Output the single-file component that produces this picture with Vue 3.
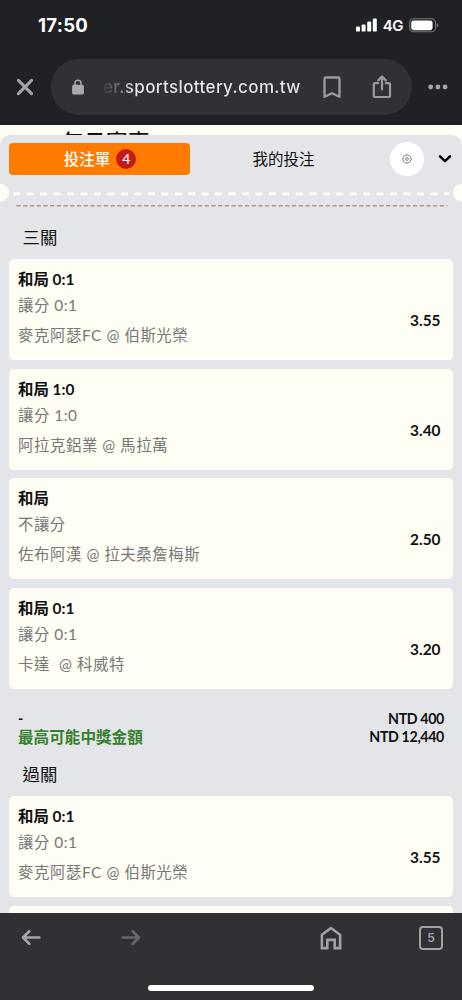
<script setup>
const tripleBets = [
  { pick: '和局 0:1', market: '讓分 0:1', match: '麥克阿瑟FC @ 伯斯光榮', odds: '3.55' },
  { pick: '和局 1:0', market: '讓分 1:0', match: '阿拉克鋁業 @ 馬拉萬', odds: '3.40' },
  { pick: '和局', market: '不讓分', match: '佐布阿漢 @ 拉夫桑詹梅斯', odds: '2.50' },
  { pick: '和局 0:1', market: '讓分 0:1', match: '卡達  @ 科威特', odds: '3.20' },
]
const parlayBets = [
  { pick: '和局 0:1', market: '讓分 0:1', match: '麥克阿瑟FC @ 伯斯光榮', odds: '3.55' },
]
const groups = [
  { title: '三關', bets: tripleBets, stake: 'NTD 400', payout: 'NTD 12,440' },
  { title: '過關', bets: parlayBets, more: true },
]
</script>

<template>
  <div class="phone">
    <header class="chrome">
      <div class="status">
        <span class="time">17:50</span>
        <div class="signals">
          <svg class="bars" width="22" height="14" viewBox="0 0 22 14" fill="#fff">
            <rect x="0" y="8.6" width="4" height="5" rx="1.2" />
            <rect x="5.6" y="6.4" width="4" height="7.2" rx="1.2" />
            <rect x="11.2" y="3.6" width="4" height="10" rx="1.2" />
            <rect x="16.8" y="0.6" width="4" height="13" rx="1.2" />
          </svg>
          <span class="network">4G</span>
          <svg class="battery" width="30" height="15" viewBox="0 0 30 15">
            <rect x="0.6" y="0.8" width="26" height="13" rx="4" fill="none" stroke="#77787b" stroke-width="1.1" />
            <rect x="2.2" y="2.4" width="21.4" height="9.8" rx="2.4" fill="#fff" />
            <path d="M27.8 5.2q1.6.6 1.6 2.1t-1.6 2.1z" fill="#77787b" />
          </svg>
        </div>
      </div>
      <div class="address">
        <svg class="close" width="18" height="18" viewBox="0 0 18 18" fill="none" stroke="#a4a5a9" stroke-width="3" stroke-linecap="round">
          <path d="M2.4 2.4l13.2 13.2M15.6 2.4L2.4 15.6" />
        </svg>
        <div class="pill">
          <svg class="lock" width="12" height="16" viewBox="0 0 12 16">
            <path d="M3 7V4.2a3 3 0 0 1 6 0V7" fill="none" stroke="#a9aaad" stroke-width="1.5" />
            <rect x="0.1" y="5.8" width="11.8" height="9.6" rx="1.6" fill="#a9aaad" />
          </svg>
          <span class="url">er.sportslottery.com.tw</span>
          <svg class="bookmark" width="18" height="23" viewBox="0 0 18 23" fill="none" stroke="#9b9ca0" stroke-width="2.3" stroke-linejoin="round">
            <path d="M1.5 2.8q0-1.3 1.3-1.3h12.4q1.3 0 1.3 1.3v18L9 17.2l-7.5 3.6z" />
          </svg>
          <svg class="share" width="20" height="24" viewBox="0 0 20 24" fill="none" stroke="#9b9ca0" stroke-width="2.2" stroke-linecap="round" stroke-linejoin="round">
            <path d="M6 8.2H3.2Q1.8 8.2 1.8 9.6v11Q1.8 22 3.2 22h13.4q1.4 0 1.4-1.4v-11q0-1.4-1.4-1.4h-2.8M10 14.3V2M6.2 5.4L10 1.6l3.8 3.8" />
          </svg>
        </div>
        <svg class="more" width="20" height="6" viewBox="0 0 20 6" fill="#a4a5a9">
          <circle cx="2.7" cy="3" r="2.4" /><circle cx="9.9" cy="3" r="2.4" /><circle cx="17.1" cy="3" r="2.4" />
        </svg>
      </div>
    </header>

    <main class="page">
      <div class="peek"><span>每日賽事</span></div>
      <section class="sheet">
        <nav class="tabs">
          <div class="tab active">投注單<span class="badge">4</span></div>
          <div class="tab">我的投注</div>
          <div class="gear">
            <svg width="10" height="10" viewBox="0 0 10 10" fill="none" stroke="#666" stroke-width="0.8">
              <path d="M4.1.8h1.8l.4 1 1-.4 1.3 1.3-.4 1 1 .4v1.8l-1 .4.4 1-1.3 1.3-1-.4-.4 1H4.1l-.4-1-1 .4-1.3-1.3.4-1-1-.4V4.1l1-.4-.4-1 1.3-1.3 1 .4z" />
              <circle cx="5" cy="5" r="1.4" />
            </svg>
          </div>
          <svg class="chevron" width="14" height="10" viewBox="0 0 14 10" fill="none" stroke="#000" stroke-width="2.5" stroke-linecap="round" stroke-linejoin="round">
            <path d="M2 2.4l5 4.8 5-4.8" />
          </svg>
        </nav>
        <svg class="tear" width="462" height="36" viewBox="0 0 462 36">
          <circle cx="0" cy="9.7" r="9" fill="#fffef5" />
          <circle cx="462" cy="9.7" r="9" fill="#fffef5" />
          <path d="M13.2 10.8H449" stroke="#fffffa" stroke-width="2.8" stroke-dasharray="7 6.46" />
          <path d="M16.5 22.8H447.5" stroke="#bd8d8b" stroke-width="1.6" stroke-dasharray="4.2 2.52" />
        </svg>

        <template v-for="group in groups" :key="group.title">
          <h2>{{ group.title }}</h2>
          <div class="cards">
            <article v-for="bet in group.bets" :key="bet.match" class="card">
              <div>
                <p class="pick">{{ bet.pick }}</p>
                <p class="market">{{ bet.market }}</p>
                <p class="match">{{ bet.match }}</p>
              </div>
              <strong>{{ bet.odds }}</strong>
            </article>
            <div v-if="group.more" class="card"></div>
          </div>
          <div v-if="group.stake" class="totals">
            <div class="line"><span>-</span><span>{{ group.stake }}</span></div>
            <div class="line"><span class="win">最高可能中獎金額</span><span>{{ group.payout }}</span></div>
          </div>
        </template>
      </section>
    </main>

    <footer class="toolbar">
      <div class="buttons">
        <svg width="20" height="17" viewBox="0 0 20 17" fill="none" stroke="#a4a5a9" stroke-width="2.7" stroke-linecap="round" stroke-linejoin="round">
          <path d="M18.3 8.5H2.2M8.3 2.2L2 8.5l6.3 6.3" />
        </svg>
        <svg class="forward" width="20" height="17" viewBox="0 0 20 17" fill="none" stroke="#66676b" stroke-width="2.7" stroke-linecap="round" stroke-linejoin="round">
          <path d="M1.7 8.5h16.1M11.7 2.2L18 8.5l-6.3 6.3" />
        </svg>
        <svg class="home" width="22" height="24" viewBox="0 0 22 24" fill="none" stroke="#a1a2a6" stroke-width="2.6">
          <path d="M1.9 8.8L11 2l9.1 6.8v13.3h-5.4v-8.2H7.3v8.2H1.9z" />
        </svg>
        <span class="count">5</span>
      </div>
      <div class="indicator"></div>
    </footer>
  </div>
</template>

<style>
body { margin: 0; }
</style>

<style scoped>
* { box-sizing: border-box; }
.phone {
  width: 462px; height: 1000px; overflow: hidden;
  display: flex; flex-direction: column;
  font-family: Lato, "Noto Sans CJK TC", sans-serif;
  color: #111;
}
.chrome { height: 125px; flex: none; background: #202125; font-family: Inter, sans-serif; }
.status { height: 50px; padding: 0 23px 0 38px; display: flex; justify-content: space-between; align-items: center; color: #fff; }
.time { font-size: 18.5px; font-weight: 700; letter-spacing: .3px; }
.signals { display: flex; align-items: center; }
.network { font-size: 15px; font-weight: 600; margin: 1px 6px 0 5px; letter-spacing: -.5px; }
.address { height: 75px; padding: 9px 0 10px 15.5px; display: flex; align-items: center; }
.pill { width: 361px; height: 56px; margin-left: 17px; padding-left: 21.5px; border-radius: 28px; background: #303136; display: flex; align-items: center; }
.url {
  width: 200px; margin-left: 19px; font-size: 17px; font-weight: 500; letter-spacing: .37px; white-space: nowrap;
  color: transparent; background: linear-gradient(90deg, #3b3c40 0, #77787b 16px, #e8e9eb 30px); background-clip: text;
}
.bookmark { margin-left: 20px; }
.share { margin: 0 0 0 31px; }
.more { margin-left: 16px; }

.page { height: 788px; flex: none; overflow: hidden; background: #fffef5; }
.peek { height: 10px; overflow: hidden; padding-left: 62px; }
.peek span { display: block; font-size: 21.5px; line-height: 24px; font-weight: 500; padding-top: 5px; letter-spacing: .5px; }
.sheet { height: 778px; overflow: hidden; background: #e4e5e8; border-radius: 10px 10px 0 0; }
.tabs { height: 48px; padding: 0 10px 0 9px; display: flex; align-items: center; }
.tab { width: 186px; height: 32px; padding-left: 1px; border-radius: 4px; font-size: 15.5px; line-height: 22px; padding-bottom: 1px; display: flex; align-items: center; justify-content: center; }
.tab.active { width: 181px; background: #ff7b00; color: #fff; font-weight: 500; }
.badge { width: 20px; height: 20px; margin-left: 6px; border-radius: 50%; background: #c51b15; font-size: 14px; line-height: 20px; text-align: center; }
.gear { width: 34px; height: 34px; margin-left: 14px; border-radius: 50%; background: #fff; display: flex; align-items: center; justify-content: center; }
.chevron { margin-left: 14px; }
.tear { display: block; }
h2 { margin: 0; height: 40px; padding-left: 22.5px; font-size: 17.4px; line-height: 37px; font-weight: 400; }
.cards { padding: 0 9px; display: flex; flex-direction: column; gap: 8.7px; }
.card { height: 101px; flex: none; padding: 8px 12.5px 0 9px; border-radius: 5px; background: #fffef5; display: flex; justify-content: space-between; }
.card p { margin: 0; white-space: pre; font-size: 15.4px; }
.card .pick { line-height: 25px; font-weight: 700; }
.card .market { line-height: 26px; color: #777; letter-spacing: .5px; }
.card .match { line-height: 35px; color: #777; letter-spacing: .58px; }
.card strong { font-size: 15.4px; line-height: 24px; font-weight: 700; padding-top: 41px; }
.totals { height: 67px; padding: 21px 18px 0; }
.line { height: 18px; display: flex; justify-content: space-between; font-size: 14.2px; line-height: 18px; font-weight: 700; letter-spacing: -.35px; }
.line .win { color: #35802a; font-size: 15.6px; letter-spacing: 0; }

.toolbar { height: 87px; flex: none; background: #303135; }
.buttons { height: 49px; padding: 0 19px 0 21px; display: flex; align-items: center; }
.forward { margin-left: 80px; }
.home { margin-left: 179px; }
.count { width: 24px; height: 24px; margin-left: 77px; border: 2px solid #a1a2a6; border-radius: 4px; color: #a1a2a6; font: 600 12px/20px Inter, sans-serif; text-align: center; }
.indicator { width: 166px; height: 6px; margin: 23px 0 0 148px; border-radius: 3px; background: #fff; }
</style>
